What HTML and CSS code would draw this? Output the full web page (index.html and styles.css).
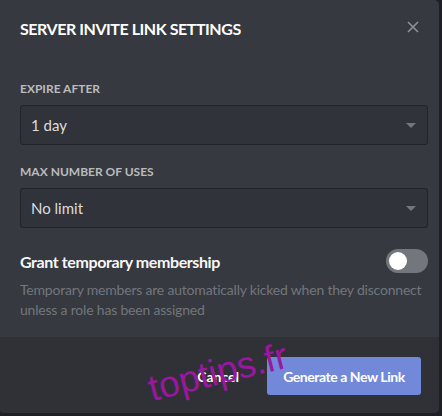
FILE: index.html
```html
<!DOCTYPE html>
<html lang="en">
<head>
  <meta charset="UTF-8" />
  <title>Server Invite Link Settings</title>
  <link rel="stylesheet" href="styles.css">
</head>
<body>

<div class="modal">
  <div class="header">
    <h2 class="title">Server Invite Link Settings</h2>
    <button class="close" type="button" aria-label="Close">
      <svg width="12" height="12" viewBox="0 0 12 12"><path d="M1 1 L11 11 M11 1 L1 11" stroke="currentColor" stroke-width="1.6" fill="none"/></svg>
    </button>
  </div>

  <div class="content">
    <label class="label first">Expire After</label>
    <div class="select">
      <span>1 day</span>
      <span class="arrow"></span>
    </div>

    <label class="label">Max Number of Uses</label>
    <div class="select">
      <span>No limit</span>
      <span class="arrow"></span>
    </div>

    <div class="switch-row">
      <span class="switch-title">Grant temporary membership</span>
      <span class="toggle"><span class="knob"></span></span>
    </div>
    <p class="note">Temporary members are automatically kicked when they disconnect unless a role has been assigned</p>
  </div>

  <div class="footer">
    <button class="cancel" type="button">Cancel</button>
    <button class="primary" type="button">Generate a New Link</button>
  </div>
</div>

<div class="watermark">toptips.fr</div>

</body>
</html>
```

FILE: styles.css
```css
body {
  margin: 0;
  padding: 0;
  background-color: #1e1f22;
  font-family: Lato, "Noto Sans", sans-serif;
  position: relative;
  height: 416px;
  overflow: hidden;
}
.modal {
  width: 439px;
  height: 413px;
  background: #36393f;
  border-radius: 0 5px 5px 4px;
  display: flex;
  flex-direction: column;
  overflow: hidden;
}
.header {
  display: flex;
  justify-content: space-between;
  align-items: center;
  padding: 19px 20px 0 20px;
  height: 20px;
}
.title {
  margin: 0;
  font-size: 16px;
  line-height: 20px;
  font-weight: 700;
  text-transform: uppercase;
  color: #ffffff;
  letter-spacing: -0.45px;
}
.close {
  background: none;
  border: none;
  padding: 0;
  color: #8e9297;
  margin-top: -4px;
  display: flex;
}
.content {
  padding: 0 11px 0 20px;
  flex: 1;
}
.label {
  display: block;
  font-size: 12px;
  line-height: 16px;
  font-weight: 700;
  text-transform: uppercase;
  color: #b9bbbe;
  margin: 19px 0 8px;
}
.label.first {
  margin-top: 42px;
}
.select {
  height: 38px;
  border: 1px solid #222428;
  border-radius: 3px;
  background: #303339;
  display: flex;
  align-items: center;
  justify-content: space-between;
  padding: 0 11px 0 10px;
  font-size: 15px;
  color: #dcddde;
}
.arrow {
  width: 0;
  height: 0;
  border-left: 5px solid transparent;
  border-right: 5px solid transparent;
  border-top: 5px solid #72767d;
}
.switch-row {
  display: flex;
  justify-content: space-between;
  align-items: center;
  margin-top: 21px;
  height: 24px;
}
.switch-title {
  font-size: 16px;
  font-weight: 700;
  color: #f6f6f7;
  letter-spacing: -0.4px;
}
.toggle {
  width: 42px;
  height: 24px;
  border-radius: 12px;
  background: #72767d;
  display: flex;
  align-items: center;
  padding-left: 3px;
  box-sizing: border-box;
}
.knob {
  width: 18px;
  height: 18px;
  border-radius: 50%;
  background: #ffffff;
}
.note {
  margin: 7px 0 0;
  font-size: 14px;
  line-height: 20px;
  color: #72767d;
  letter-spacing: -0.2px;
}
.footer {
  background: #2f3136;
  height: 76px;
  display: flex;
  justify-content: flex-end;
  align-items: flex-start;
  padding: 20px 18px 0 0;
  box-sizing: border-box;
}
.cancel {
  background: none;
  border: none;
  color: #ffffff;
  font-family: inherit;
  font-size: 14px;
  font-weight: 700;
  height: 38px;
  padding: 0 16px;
  margin-right: 12px;
}
.primary {
  background: #7289da;
  border: none;
  border-radius: 3px;
  color: #ffffff;
  font-family: inherit;
  font-size: 14px;
  font-weight: 700;
  letter-spacing: -0.45px;
  width: 154px;
  height: 38px;
  padding: 0;
}
.watermark {
  position: absolute;
  left: 154px;
  top: 369px;
  font-family: "Liberation Sans", Arial, sans-serif;
  font-size: 37px;
  color: #9a179f;
  transform: rotate(-14deg);
  transform-origin: left bottom;
  line-height: 40px;
}
```
